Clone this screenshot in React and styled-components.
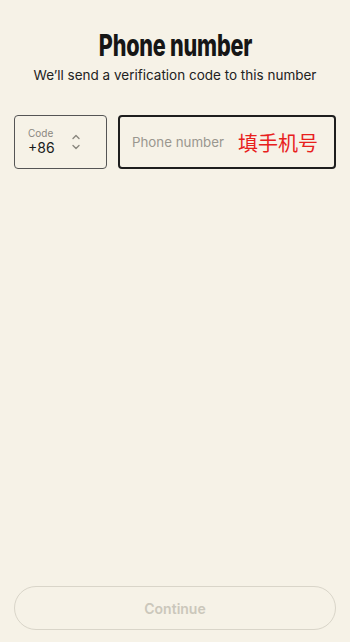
import React from "react";
import styled, { createGlobalStyle } from "styled-components";

const Global = createGlobalStyle`
  body {
    margin: 0;
    background: #f6f2e7;
    font-family: "Inter", "Noto Sans", sans-serif;
  }
`;

const Page = styled.div`
  height: 642px;
  display: flex;
  flex-direction: column;
  padding: 0 14px 12px;
  box-sizing: border-box;
  background: #f6f2e7;
`;

const Title = styled.h1`
  margin: 27px 0 0;
  text-align: center;
  font-family: "Inter", sans-serif;
  font-weight: 800;
  font-size: 30px;
  line-height: 36px;
  color: #161616;
`;

const Squeeze = styled.span`
  display: inline-block;
  transform: scaleX(0.72);
  letter-spacing: -0.3px;
`;

const Subtitle = styled.p`
  margin: 3px 0 0;
  text-align: center;
  font-size: 13.5px;
  line-height: 18px;
  color: #222;
`;

const Fields = styled.div`
  display: flex;
  gap: 11px;
  margin-top: 31px;
`;

const CodeBox = styled.div`
  width: 93px;
  height: 54px;
  box-sizing: border-box;
  border: 1px solid #555;
  border-radius: 4px;
  display: flex;
  align-items: center;
  padding: 0 0 0 13px;
  gap: 16px;
`;

const CodeText = styled.div`
  display: flex;
  flex-direction: column;
`;

const CodeLabel = styled.span`
  font-size: 10px;
  line-height: 12px;
  color: #8a877f;
`;

const CodeValue = styled.span`
  font-size: 14px;
  line-height: 18px;
  color: #1a1a1a;
`;

const PhoneBox = styled.div`
  flex: 1;
  height: 54px;
  box-sizing: border-box;
  border: 2px solid #1e1e1e;
  border-radius: 4px;
  display: flex;
  align-items: center;
  padding: 0 12px;
`;

const Placeholder = styled.span`
  font-size: 13.3px;
  color: #9a978f;
`;

const Note = styled.span`
  margin-left: 14px;
  font-family: "Noto Sans CJK SC", sans-serif;
  font-size: 20px;
  color: #e8201c;
`;

const Spacer = styled.div`
  flex: 1;
`;

const Button = styled.button`
  height: 44px;
  border-radius: 22px;
  border: 1px solid #d9d5c9;
  background: transparent;
  font-family: "Inter", sans-serif;
  font-size: 14px;
  font-weight: 600;
  color: #cbc7bb;
`;

function Chevrons() {
  return (
    <svg width="10" height="18" viewBox="0 0 10 18" fill="none" stroke="#8a877f" strokeWidth="1.4" strokeLinecap="round" strokeLinejoin="round">
      <path d="M2 5.5 L5 2.5 L8 5.5" />
      <path d="M2 12.5 L5 15.5 L8 12.5" />
    </svg>
  );
}

export default function App() {
  return (
    <>
      <Global />
      <Page>
        <Title>
          <Squeeze>Phone number</Squeeze>
        </Title>
        <Subtitle>We’ll send a verification code to this number</Subtitle>
        <Fields>
          <CodeBox>
            <CodeText>
              <CodeLabel>Code</CodeLabel>
              <CodeValue>+86</CodeValue>
            </CodeText>
            <Chevrons />
          </CodeBox>
          <PhoneBox>
            <Placeholder>Phone number</Placeholder>
            <Note>填手机号</Note>
          </PhoneBox>
        </Fields>
        <Spacer />
        <Button>Continue</Button>
      </Page>
    </>
  );
}
